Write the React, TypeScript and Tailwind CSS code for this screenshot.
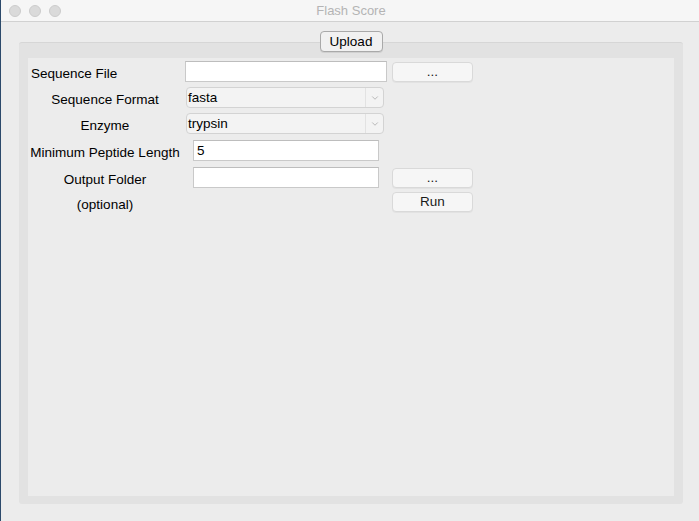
import { ChevronDown } from "lucide-react";

const font = { fontFamily: '"Liberation Sans", Arial, sans-serif' };

function Field({ w, value }: { w: string; value?: string }) {
  return (
    <div
      className={`${w} h-[21px] bg-white border border-[#c9c9c9] border-t-[#bdbdbd] flex items-center pl-[3px] pt-[2px] text-[13.5px] text-black`}
    >
      {value}
    </div>
  );
}

function Select({ value }: { value: string }) {
  return (
    <div className="w-[198px] h-[21px] bg-[#f3f3f3] border border-[#d3d3d3] rounded-[4px] flex items-center text-[13.5px] text-black">
      <span className="flex-1 pl-[1px] pt-[2px]">{value}</span>
      <span className="w-[18px] h-full border-l border-[#e2e2e2] flex items-center justify-center">
        <ChevronDown size={10} strokeWidth={1.6} className="text-[#9a9a9a]" />
      </span>
    </div>
  );
}

function Btn({ children, top = "mt-[1px]" }: { children: React.ReactNode; top?: string }) {
  return (
    <div
      className={`${top} w-[81px] h-[20px] bg-[#f6f6f6] border border-[#d9d9d9] rounded-[4px] shadow-[0_1px_0_rgba(0,0,0,0.04)] flex items-center justify-center pt-[1px] text-[13.5px] text-[#1a1a1a]`}
    >
      {children}
    </div>
  );
}

function Label({ children }: { children: React.ReactNode }) {
  return (
    <div className="w-[150px] h-[21px] leading-[21px] pt-[2px] text-center text-[13.5px] text-black whitespace-nowrap">
      {children}
    </div>
  );
}

export default function App() {
  return (
    <div className="w-[699px] h-[521px] bg-[#2c4a6b] pl-[1px]" style={font}>
      <div className="h-full bg-[#ececec] flex flex-col">
        {/* title bar */}
        <div className="h-[22px] bg-[#f6f6f6] border-b border-[#d1d1d1] flex items-center relative">
          <div className="flex gap-[8px] pl-[8px]">
            {[0, 1, 2].map((i) => (
              <span key={i} className="w-[12px] h-[12px] rounded-full bg-[#dadada] border border-[#cccccc]" />
            ))}
          </div>
          <div className="flex-1 text-center text-[13px] text-[#b4b4b4] pr-[58px]">Flash Score</div>
        </div>

        <div className="flex flex-col items-center pt-[9px] pl-[18px] pr-[16px]">
          <div className="relative z-10 w-[63px] h-[21px] bg-[#f1f1f1] border border-[#a9a9a9] rounded-[4px] flex items-center justify-center pt-[1px] text-[13.5px] text-black shadow-[0_1px_0_rgba(0,0,0,0.08)]">
            Upload
          </div>
          <div className="-mt-[10px] w-full h-[462px] bg-[#e2e2e2] border-t border-[#d6d6d6] rounded-[3px] pt-[15px] px-[9px] pb-[8px]">
            <div className="h-full bg-[#ececec] pl-[2px] pt-[3px] flex flex-col">
              {/* row 1 */}
              <div className="flex items-start">
                <div className="w-[155px] h-[21px] pl-[1px] pt-[2px] text-[13.5px] text-black leading-[21px]">Sequence File</div>
                <Field w="w-[202px]" />
                <div className="ml-[5px]">
                  <Btn>...</Btn>
                </div>
              </div>
              {/* row 2 */}
              <div className="flex items-center mt-[5px]">
                <Label>Sequence Format</Label>
                <div className="ml-[6px]">
                  <Select value="fasta" />
                </div>
              </div>
              {/* row 3 */}
              <div className="flex items-center mt-[5px]">
                <Label>Enzyme</Label>
                <div className="ml-[6px]">
                  <Select value="trypsin" />
                </div>
              </div>
              {/* row 4 */}
              <div className="flex items-center mt-[6px]">
                <Label>Minimum Peptide Length</Label>
                <div className="ml-[13px]">
                  <Field w="w-[186px]" value="5" />
                </div>
              </div>
              {/* row 5 */}
              <div className="flex items-start mt-[6px]">
                <Label>Output Folder</Label>
                <div className="ml-[13px]">
                  <Field w="w-[186px]" />
                </div>
                <div className="ml-[13px]">
                  <Btn>...</Btn>
                </div>
              </div>
              {/* row 6 */}
              <div className="flex items-start mt-[4px]">
                <Label>(optional)</Label>
                <div className="ml-[212px]">
                  <Btn top="mt-0">Run</Btn>
                </div>
              </div>
            </div>
          </div>
        </div>
      </div>
    </div>
  );
}
